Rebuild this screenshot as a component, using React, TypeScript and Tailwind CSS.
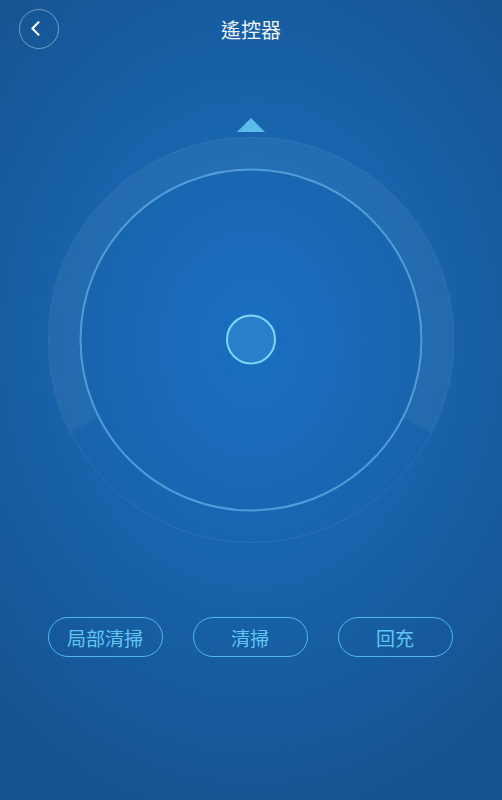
import React from "react";

function Ring() {
  const c = 203;
  const ro = 203;
  const ri = 170.5;
  const rad = (d: number) => ((d - 90) * Math.PI) / 180;
  const pt = (r: number, deg: number) => [c + r * Math.cos(rad(deg)), c + r * Math.sin(rad(deg))];
  const a0 = -117;
  const a1 = 117;
  const [ox0, oy0] = pt(ro, a0);
  const [ox1, oy1] = pt(ro, a1);
  const [ix0, iy0] = pt(ri, a0);
  const [ix1, iy1] = pt(ri, a1);
  const band = `M ${ox0} ${oy0} A ${ro} ${ro} 0 1 1 ${ox1} ${oy1} L ${ix1} ${iy1} A ${ri} ${ri} 0 1 0 ${ix0} ${iy0} Z`;
  return (
    <svg width="406" height="406" viewBox="0 0 406 406" className="block">
      <defs>
        <filter id="soft" x="-5%" y="-5%" width="110%" height="110%">
          <feGaussianBlur stdDeviation="1.5" />
        </filter>
      </defs>
      <path d={band} fill="#ffffff" fillOpacity="0.05" filter="url(#soft)" />
      <circle cx={c} cy={c} r={ro - 0.5} fill="none" stroke="#ffffff" strokeOpacity="0.08" strokeWidth="1" />
      <circle cx={c} cy={c} r={ri} fill="none" stroke="#5fa9e2" strokeOpacity="0.8" strokeWidth="2" />
      <circle cx={c} cy={c - 0.5} r="24" fill="#2a7fca" stroke="#7ed6f8" strokeWidth="2" />
    </svg>
  );
}

export default function App() {
  const font = { fontFamily: '"Noto Sans CJK TC", "Noto Sans CJK SC", "Noto Sans", sans-serif' };
  return (
    <div
      className="relative flex h-[800px] w-full flex-col items-center overflow-hidden bg-[radial-gradient(ellipse_75%_60%_at_50%_43%,#1a6fc2_0%,#1864ad_45%,#15538f_100%)]"
      style={font}
    >
      <div className="relative flex h-[58px] w-full items-center justify-center pt-[2px]">
        <button className="absolute left-[19px] top-[9px] flex h-[40px] w-[40px] items-center justify-center rounded-full border border-white/40">
          <svg width="40" height="40" viewBox="0 0 40 40">
            <path d="M19.5 13 L13 19.5 L19.5 26" fill="none" stroke="#ffffff" strokeWidth="2.2" strokeLinecap="round" strokeLinejoin="round" />
          </svg>
        </button>
        <span className="text-[20px] leading-none text-[#eef3f8]">遙控器</span>
      </div>
      <div className="mt-[60px] h-0 w-0 border-x-[14.5px] border-b-[14px] border-x-transparent border-b-[#5bbbea]" />
      <div className="mt-[5px]">
        <Ring />
      </div>
      <div className="mt-[74px] flex gap-[30px] pr-[2px]">
        {["局部清掃", "清掃", "回充"].map((t) => (
          <button
            key={t}
            className="flex h-[40px] w-[115px] items-center justify-center rounded-full border-[1.5px] border-[#4fb8ec] text-[19px] leading-none text-[#62c6f3]"
          >
            {t}
          </button>
        ))}
      </div>
    </div>
  );
}
